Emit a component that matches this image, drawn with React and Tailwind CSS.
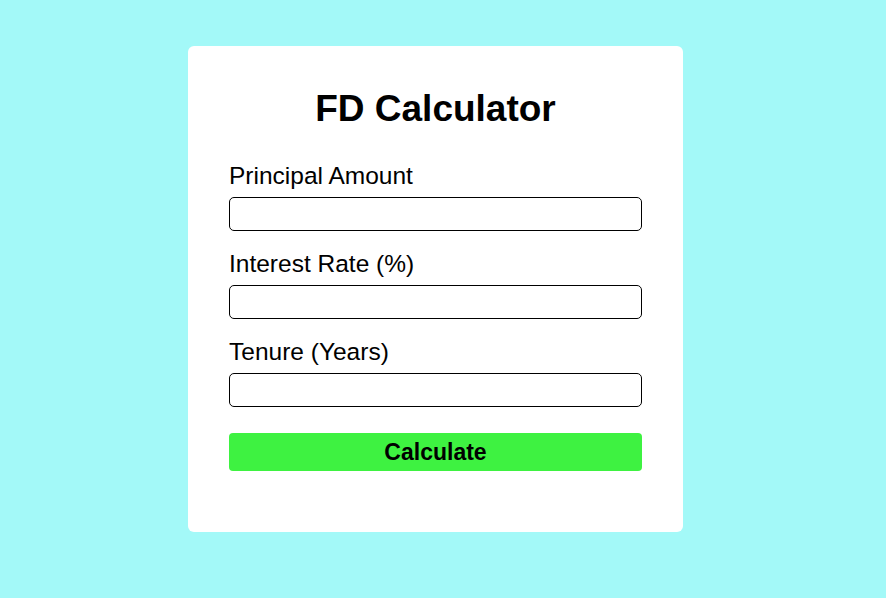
import { useState } from "react"

const fields = [
  { name: "principal", label: "Principal Amount" },
  { name: "rate", label: "Interest Rate (%)" },
  { name: "tenure", label: "Tenure (Years)" },
]

export default function App() {
  const [values, setValues] = useState({ principal: "", rate: "", tenure: "" })
  const [result, setResult] = useState(null)

  function calculate() {
    const p = parseFloat(values.principal)
    const r = parseFloat(values.rate)
    const t = parseFloat(values.tenure)
    if (isNaN(p) || isNaN(r) || isNaN(t)) return
    setResult((p * Math.pow(1 + r / 100, t)).toFixed(2))
  }

  return (
    <div className="min-h-screen bg-[#a3f9f8] flex justify-center pr-[15px] pt-[46px] font-['Liberation_Sans',Arial,sans-serif] text-black">
      <div className="w-[495px] bg-white rounded-[6px] pl-[41px] pr-[41px] pt-[42px] pb-[61px] self-start">
        <h1 className="text-[37px] font-bold text-center leading-[41px] mb-[33px]">FD Calculator</h1>

        {fields.map((f, i) => (
          <div key={f.name} className={i > 0 ? "mt-[19px]" : ""}>
            <label className="block text-[24.5px] leading-[28px] mb-[7px]">{f.label}</label>
            <input
              autoFocus={i === 0}
              type="text"
              inputMode="decimal"
              value={values[f.name]}
              onChange={e => setValues(v => ({ ...v, [f.name]: e.target.value }))}
              className="block w-full h-[34px] border border-black rounded-[5px] px-[10px] text-[18px] outline-none caret-black"
            />
          </div>
        ))}

        <button
          onClick={calculate}
          className="block w-full h-[38px] mt-[26px] bg-[#3ef241] rounded-[4px] text-[23px] font-bold"
        >
          Calculate
        </button>

        {result && (
          <p className="mt-4 text-center text-[20px]">Maturity Amount: {result}</p>
        )}
      </div>
    </div>
  )
}
